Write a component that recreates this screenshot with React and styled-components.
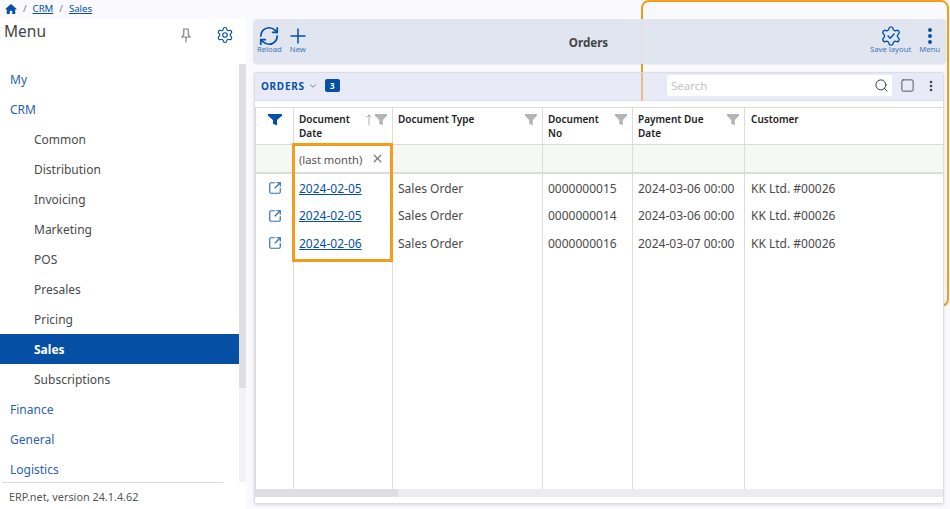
import React from "react"
import styled, { createGlobalStyle } from "styled-components"
import {
  ChevronDown,
  MoveUp,
  Plus,
  RefreshCw,
  Search,
  Settings,
  Square,
  SquareArrowOutUpRight,
  X,
} from "lucide-react"

const BLUE = "#0550a5"
const LINE = "#dcdcdc"
const ORANGE = "#f59c1a"
const COLUMNS = "39px 99px 150px 90px 112px 1fr"

const GlobalStyle = createGlobalStyle`
  html, body {
    margin: 0;
    padding: 0;
    height: 509px;
    overflow: hidden;
    background: #f9f9fe;
    font-family: "Noto Sans", sans-serif;
  }
  * { box-sizing: border-box; }
`

const Page = styled.div`
  position: relative;
  width: 950px;
  height: 509px;
  overflow: hidden;
  display: flex;
  flex-direction: column;
`

const Breadcrumb = styled.nav`
  height: 19px;
  flex: none;
  display: flex;
  align-items: center;
  gap: 6px;
  padding: 0 0 2px 5px;
  font-size: 9.6px;
  color: #777;
`

const CrumbLink = styled.a`
  color: ${BLUE};
  text-decoration: underline;
`

const Body = styled.div`
  flex: 1;
  min-height: 0;
  display: flex;
`

const Sidebar = styled.aside`
  width: 246px;
  flex: none;
  background: #fff;
  display: flex;
  flex-direction: column;
`

const SidebarHead = styled.div`
  height: 45px;
  flex: none;
  display: flex;
  align-items: flex-start;
  padding: 2px 12px 0 4px;
  color: #444;
`

const SidebarTitle = styled.div`
  flex: 1;
  font-size: 15.5px;
  line-height: 20px;
`

const HeadIcons = styled.div`
  display: flex;
  gap: 25px;
  padding-top: 5px;
  align-items: center;
`

const MenuScroll = styled.div`
  flex: 1;
  min-height: 0;
  display: flex;
`

const MenuList = styled.ul`
  flex: 1;
  margin: 0;
  padding: 0;
  list-style: none;
  overflow: hidden;
`

const MenuItem = styled.li`
  height: 30px;
  display: flex;
  align-items: center;
  font-size: 12px;
  padding-left: ${p => (p.$sub ? 34 : 10)}px;
  color: ${p => (p.$active ? "#fff" : p.$sub ? "#4a4a4a" : "#2a62ad")};
  background: ${p => (p.$active ? BLUE : "transparent")};
  font-weight: ${p => (p.$active ? 700 : 400)};
`

const ScrollTrack = styled.div`
  width: 7px;
  flex: none;
  background: #f3f3f7;
`

const ScrollThumb = styled.div`
  height: 324px;
  background: #dfdfe4;
`

const SidebarFoot = styled.div`
  height: 27px;
  flex: none;
  margin-left: 2px;
  width: 221px;
  border-top: 1px solid ${LINE};
  padding-left: 7px;
  display: flex;
  align-items: center;
  font-size: 10.85px;
  color: #555;
  white-space: nowrap;
`

const Main = styled.main`
  flex: 1;
  min-width: 0;
  padding: 0 4px 5px 7px;
  display: flex;
  flex-direction: column;
  gap: 8px;
`

const Toolbar = styled.div`
  position: relative;
  z-index: 2;
  height: 45px;
  flex: none;
  background: rgba(223, 228, 238, 0.95);
  border-radius: 4px;
  display: flex;
  align-items: center;
  padding: 0 6px 0 4px;
  box-shadow: 0 1px 2px rgba(0, 0, 0, 0.06);
`

const ToolGroup = styled.div`
  display: flex;
  gap: 8px;
  width: ${p => (p.$end ? 200 : 180)}px;
  margin-bottom: 2px;
  justify-content: ${p => (p.$end ? "flex-end" : "flex-start")};
`

const ToolTitle = styled.div`
  flex: 1;
  text-align: center;
  padding-top: 1px;
  font-size: 11.6px;
  font-weight: 700;
  color: #444;
`

const ToolButton = styled.div`
  display: flex;
  flex-direction: column;
  align-items: center;
  font-size: 7.7px;
  line-height: 9px;
  color: #3f75b8;
  white-space: nowrap;
`

const ToolIcon = styled.span`
  width: 16px;
  height: 18px;
  display: flex;
  align-items: center;
  justify-content: center;
  svg {
    flex: none;
  }
`

const Panel = styled.section`
  position: relative;
  z-index: 2;
  flex: 1;
  min-height: 0;
  margin: 0 2px 0 1px;
  border: 1px solid #dcdce2;
  border-radius: 2px;
  box-shadow: 0 1px 3px rgba(0, 0, 0, 0.12);
  display: flex;
  flex-direction: column;
`

const PanelHead = styled.div`
  height: 28px;
  flex: none;
  background: rgba(215, 222, 240, 0.5);
  border-bottom: 1px dotted #d4d8e6;
  display: flex;
  align-items: center;
  padding: 0 6px 2px;
`

const PanelTitle = styled.span`
  font-size: 10px;
  font-weight: 700;
  letter-spacing: 0.7px;
  color: ${BLUE};
`

const CountBadge = styled.span`
  background: ${BLUE};
  color: #fff;
  font-size: 8px;
  font-weight: 700;
  width: 15px;
  height: 13px;
  border-radius: 2px;
  margin-left: 7px;
  display: flex;
  align-items: center;
  justify-content: center;
`

const SearchBox = styled.div`
  width: 225px;
  height: 21px;
  margin-left: auto;
  background: #fff;
  border-radius: 2px;
  display: flex;
  align-items: center;
  justify-content: space-between;
  padding: 0 3px 0 4px;
  font-size: 11.5px;
  color: #c4c4c4;
`

const HeadAction = styled.div`
  display: flex;
  margin-left: ${p => p.$gap}px;
  color: #444;
`

const Grid = styled.div`
  position: relative;
  flex: 1;
  min-height: 0;
  padding: 6px 0;
  background: #fff;
  display: flex;
  flex-direction: column;
`

const Row = styled.div`
  display: grid;
  grid-template-columns: ${COLUMNS};
  height: ${p => p.$h}px;
  flex: ${p => (p.$fill ? 1 : "none")};
  background: ${p => p.$bg || "transparent"};
  border-top: ${p => (p.$ruled ? `1px solid ${LINE}` : "0")};
  border-bottom: ${p => (p.$thick ? `2px solid ${LINE}` : "0")};
`

const Cell = styled.div`
  border-right: 1px solid ${LINE};
  padding: 0 5px;
  font-size: 12px;
  color: #4a4a4a;
  display: flex;
  align-items: center;
  white-space: nowrap;
  &:first-child {
    border-left: 1px solid ${LINE};
    justify-content: center;
  }
  &:last-child {
    border-right: 0;
    padding-left: 6px;
  }
`

const HeadCell = styled(Cell)`
  position: relative;
  align-items: flex-start;
  padding-top: 5px;
  font-size: 10px;
  line-height: 13.5px;
  font-weight: 600;
  color: #222;
  white-space: pre-line;
`

const HeadIconsRight = styled.span`
  position: absolute;
  top: 5px;
  right: 5px;
  display: flex;
  align-items: center;
`

const DateLink = styled.a`
  color: ${BLUE};
  text-decoration: underline;
`

const FilterValue = styled(Cell)`
  background: #fff;
  justify-content: space-between;
  padding: 2px 8px 0 5px;
  font-size: 11.2px;
  color: #555;
  svg {
    margin-top: -3px;
  }
`

const HScroll = styled.div`
  height: 8px;
  flex: none;
  background: #ebebf0;
`

const HThumb = styled.div`
  width: 143px;
  height: 100%;
  background: #dedee3;
`

const FrameOverlay = styled.div`
  position: absolute;
  z-index: 1;
  left: 641px;
  top: 0;
  width: 308px;
  height: 307px;
  border: 2px solid ${ORANGE};
  border-radius: 8px;
  pointer-events: none;
`

const DateHighlight = styled.div`
  position: absolute;
  left: 37px;
  top: 42px;
  width: 101px;
  height: 119px;
  border: 3px solid ${ORANGE};
  pointer-events: none;
`

const HomeIcon = () => (
  <svg width="12" height="10" viewBox="0 0 24 20" fill={BLUE}>
    <path d="M12 0 0 10.500h3.500V20h6v-6.500h5V20h6v-9.500H24z" />
  </svg>
)

const PinIcon = () => (
  <svg width="10" height="15" viewBox="0 0 10 15" fill="none" stroke="#808080" strokeWidth="1.2">
    <path d="M2.800 1h4.400v5.500L9 9H1l1.800-2.500zM5 9v5.500" />
  </svg>
)

const SaveLayoutIcon = () => (
  <svg width="22" height="22" viewBox="0 0 24 24" fill="none" stroke={BLUE} strokeWidth="1.500" strokeLinecap="round" strokeLinejoin="round">
    <path d="M9.671 4.136a2.340 2.340 0 0 1 4.659 0 2.340 2.340 0 0 0 3.319 1.915 2.340 2.340 0 0 1 2.330 4.033 2.340 2.340 0 0 0 0 3.831 2.340 2.340 0 0 1-2.330 4.033 2.340 2.340 0 0 0-3.319 1.915 2.340 2.340 0 0 1-4.659 0 2.340 2.340 0 0 0-3.320-1.915 2.340 2.340 0 0 1-2.330-4.033 2.340 2.340 0 0 0 0-3.831A2.340 2.340 0 0 1 6.350 6.051a2.340 2.340 0 0 0 3.320-1.915" />
    <path d="m8.800 12 2.300 2.400 4.300-4.600" />
  </svg>
)

const Funnel = ({ color = "#b4b4b4", width = 12, height = 13 }) => (
  <svg width={width} height={height} viewBox="0 0 24 24" fill={color} preserveAspectRatio="none">
    <path d="M0 2h24v3l-8.500 8v10l-7-3v-7L0 5z" />
  </svg>
)

const Dots = ({ color, size }) => (
  <svg width={size} height={size} viewBox="0 0 24 24" fill={color}>
    <circle cx="12" cy="4" r="2.600" />
    <circle cx="12" cy="12" r="2.600" />
    <circle cx="12" cy="20" r="2.600" />
  </svg>
)

const MENU = [
  { label: "My" },
  { label: "CRM" },
  { label: "Common", sub: true },
  { label: "Distribution", sub: true },
  { label: "Invoicing", sub: true },
  { label: "Marketing", sub: true },
  { label: "POS", sub: true },
  { label: "Presales", sub: true },
  { label: "Pricing", sub: true },
  { label: "Sales", sub: true, active: true },
  { label: "Subscriptions", sub: true },
  { label: "Finance" },
  { label: "General" },
  { label: "Logistics" },
]

const ORDERS = [
  { date: "2024-02-05", no: "0000000015", due: "2024-03-06 00:00", h: 28 },
  { date: "2024-02-05", no: "0000000014", due: "2024-03-06 00:00", h: 27 },
  { date: "2024-02-06", no: "0000000016", due: "2024-03-07 00:00", h: 28 },
]

const App = () => (
  <Page>
    <GlobalStyle />
    <Breadcrumb>
      <HomeIcon />
      <span>/</span>
      <CrumbLink>CRM</CrumbLink>
      <span>/</span>
      <CrumbLink>Sales</CrumbLink>
    </Breadcrumb>
    <Body>
      <Sidebar>
        <SidebarHead>
          <SidebarTitle>Menu</SidebarTitle>
          <HeadIcons>
            <PinIcon />
            <Settings size={18} color={BLUE} strokeWidth={1.5} />
          </HeadIcons>
        </SidebarHead>
        <MenuScroll>
          <MenuList>
            {MENU.map(item => (
              <MenuItem key={item.label} $sub={item.sub} $active={item.active}>
                {item.label}
              </MenuItem>
            ))}
          </MenuList>
          <ScrollTrack>
            <ScrollThumb />
          </ScrollTrack>
        </MenuScroll>
        <SidebarFoot>ERP.net, version 24.1.4.62</SidebarFoot>
      </Sidebar>
      <Main>
        <Toolbar>
          <ToolGroup>
            <ToolButton>
              <ToolIcon>
                <RefreshCw size={22} color={BLUE} strokeWidth={1.9} />
              </ToolIcon>
              Reload
            </ToolButton>
            <ToolButton>
              <ToolIcon>
                <Plus size={24} color={BLUE} strokeWidth={1.5} />
              </ToolIcon>
              New
            </ToolButton>
          </ToolGroup>
          <ToolTitle>Orders</ToolTitle>
          <ToolGroup $end>
            <ToolButton>
              <ToolIcon>
                <SaveLayoutIcon />
              </ToolIcon>
              Save layout
            </ToolButton>
            <ToolButton>
              <ToolIcon>
                <Dots color={BLUE} size={18} />
              </ToolIcon>
              Menu
            </ToolButton>
          </ToolGroup>
        </Toolbar>
        <Panel>
          <PanelHead>
            <PanelTitle>ORDERS</PanelTitle>
            <ChevronDown size={10} color="#667" style={{ marginLeft: 3 }} />
            <CountBadge>3</CountBadge>
            <SearchBox>
              Search
              <Search size={15} color="#333" strokeWidth={1.5} />
            </SearchBox>
            <HeadAction $gap={8}>
              <Square size={15} strokeWidth={1.4} />
            </HeadAction>
            <HeadAction $gap={10}>
              <Dots color="#444" size={12} />
            </HeadAction>
          </PanelHead>
          <Grid>
            <Row $h={37} $ruled>
              <HeadCell>
                <Funnel color={BLUE} width={14} height={13} />
              </HeadCell>
              <HeadCell>
                {"Document\nDate"}
                <HeadIconsRight>
                  <MoveUp size={12} color="#777" strokeWidth={1.2} />
                  <Funnel />
                </HeadIconsRight>
              </HeadCell>
              <HeadCell>
                Document Type
                <HeadIconsRight>
                  <Funnel />
                </HeadIconsRight>
              </HeadCell>
              <HeadCell>
                {"Document\nNo"}
                <HeadIconsRight>
                  <Funnel />
                </HeadIconsRight>
              </HeadCell>
              <HeadCell>
                {"Payment Due\nDate"}
                <HeadIconsRight>
                  <Funnel />
                </HeadIconsRight>
              </HeadCell>
              <HeadCell>Customer</HeadCell>
            </Row>
            <Row $h={30} $ruled $thick $bg="#f6f8f6">
              <Cell />
              <FilterValue>
                (last month)
                <X size={13} color="#777" strokeWidth={2.2} />
              </FilterValue>
              <Cell />
              <Cell />
              <Cell />
              <Cell />
            </Row>
            {ORDERS.map(order => (
              <Row $h={order.h} key={order.no}>
                <Cell>
                  <SquareArrowOutUpRight size={14} color="#2f6cb5" strokeWidth={2} />
                </Cell>
                <Cell>
                  <DateLink>{order.date}</DateLink>
                </Cell>
                <Cell>Sales Order</Cell>
                <Cell>{order.no}</Cell>
                <Cell>{order.due}</Cell>
                <Cell>KK Ltd. #00026</Cell>
              </Row>
            ))}
            <Row $fill>
              <Cell />
              <Cell />
              <Cell />
              <Cell />
              <Cell />
              <Cell />
            </Row>
            <HScroll>
              <HThumb />
            </HScroll>
            <DateHighlight />
          </Grid>
        </Panel>
      </Main>
    </Body>
    <FrameOverlay />
  </Page>
)

export default App
